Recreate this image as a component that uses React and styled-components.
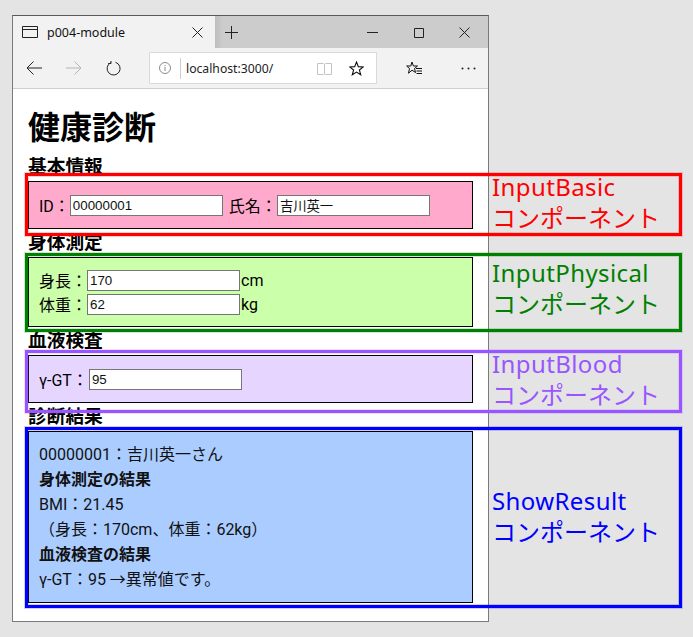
import React from "react";
import styled, { createGlobalStyle } from "styled-components";

const GlobalStyle = createGlobalStyle`
    html, body {
        margin: 0;
        padding: 0;
        background: #e4e4e4;
    }
    body {
        font-family: Roboto, "Noto Sans CJK JP", sans-serif;
        color: #000;
    }
`;

const Page = styled.div`
    position: relative;
    width: 693px;
    height: 637px;
    padding: 15px 0 0 12px;
    box-sizing: border-box;
    overflow: hidden;
`;

// Browser chrome
const Window = styled.div`
    width: 477px;
    height: 607px;
    box-sizing: border-box;
    border: 1px solid #7a7a7a;
    border-top-color: #5a5a5a;
    background: #fff;
    display: flex;
    flex-direction: column;
`;

const TitleBar = styled.div`
    height: 32px;
    background: #cccccc;
    display: flex;
    align-items: stretch;
`;

const Tab = styled.div`
    width: 202px;
    background: #f2f2f2;
    display: flex;
    align-items: center;
    padding: 0 12px 0 9px;
    box-sizing: border-box;
    font-family: "Noto Sans", sans-serif;
    font-size: 12.5px;
    color: #111;

    span {
        margin-left: 9px;
        flex: 1;
    }
`;

const NewTab = styled.div`
    width: 30px;
    padding-left: 2px;
    box-sizing: border-box;
    display: flex;
    align-items: center;
    justify-content: center;
    background: linear-gradient(to right, #bdbdbd, #cccccc 8px);
`;

const WindowButtons = styled.div`
    margin-left: auto;
    display: flex;
    align-items: center;
    gap: 35px;
    padding-right: 18px;
`;

const ToolBar = styled.div`
    height: 40px;
    background: #f2f2f2;
    border-bottom: 1px solid #cfcfcf;
    display: flex;
    align-items: center;
    padding-left: 13px;
    flex: none;
`;

const NavButtons = styled.div`
    display: flex;
    align-items: center;
    gap: 24px;
    width: 123px;
`;

const AddressBar = styled.div`
    width: 228px;
    height: 32px;
    box-sizing: border-box;
    background: #fff;
    border: 1px solid #d9d9d9;
    display: flex;
    align-items: center;
    padding: 0 12px 0 9px;
    font-family: "Noto Sans", sans-serif;
    font-size: 12.2px;
    color: #222;
`;

const Url = styled.span`
    border-left: 1px solid #cfcfcf;
    margin-left: 9px;
    padding-left: 5px;
    height: 21px;
    line-height: 21px;
    flex: 1;
`;

const FavoriteStar = styled.div`
    display: flex;
    margin-left: 17px;
`;

const ToolIcons = styled.div`
    display: flex;
    align-items: center;
    gap: 39px;
    margin-left: 29px;
`;

// Page content
const Content = styled.div`
    padding: 0 15px;
`;

const Title = styled.h1`
    font-size: 32px;
    line-height: 44px;
    font-weight: 700;
    margin: 17px 0 0;
`;

const Heading = styled.h3`
    font-size: 18.72px;
    line-height: 26px;
    font-weight: 700;
    height: 20px;
    margin: ${p => p.$top}px 0 0;
`;

const Panel = styled.div`
    width: 445px;
    box-sizing: border-box;
    border: 1px solid #000;
    background: ${p => p.$color};
    padding: ${p => p.$pad};
    font-size: 16px;
    margin-top: 7px;
`;

const Row = styled.div`
    display: flex;
    align-items: center;
    height: ${p => p.$height || 24}px;
`;

const FieldLabel = styled.label`
    white-space: nowrap;
    margin-left: ${p => p.$left || 0}px;
    margin-right: ${p => p.$right || 0}px;
`;

const TextBox = styled.input`
    width: 153px;
    height: 21px;
    box-sizing: border-box;
    border: 1px solid #767676;
    padding: 0 2px;
    margin: 0 1px 0 0;
    font-family: "Liberation Sans", "Noto Sans CJK JP", sans-serif;
    font-size: 13.33px;
    color: #111;
    background: #fff;
    border-radius: 0;
    outline: none;
`;

const ResultLine = styled.div`
    height: 25px;
    line-height: 25px;
    font-size: 16px;
    font-weight: ${p => (p.$bold ? 700 : 400)};
    white-space: nowrap;
    color: #111;
`;

// Annotation frames drawn over the screenshot
const Frame = styled.div`
    position: absolute;
    left: 25px;
    top: ${p => p.$top}px;
    width: 657px;
    height: ${p => p.$height}px;
    box-sizing: border-box;
    border: 3px solid ${p => p.$color};
    box-shadow: 0 0 0 1px ${p => p.$color}30, inset 0 0 0 1px ${p => p.$color}30;
    color: ${p => p.$color};
    padding-left: 464px;
    font-family: "Noto Sans", "Noto Sans CJK JP", sans-serif;
    font-size: 24px;
    line-height: 31px;
    white-space: nowrap;
`;

const FrameName = styled.div`
    margin-top: ${p => p.$offset}px;
    letter-spacing: 0.4px;
`;

const Svg = ({ w = 16, h = 16, children, stroke = "#222", sw = 1 }) => (
    <svg width={w} height={h} viewBox={`0 0 ${w} ${h}`} fill="none" stroke={stroke} strokeWidth={sw}>
        {children}
    </svg>
);

const frames = [
    { name: "InputBasic", color: "#ff0000", top: 173, height: 63, offset: -5 },
    { name: "InputPhysical", color: "#008000", top: 253, height: 79, offset: 1 },
    { name: "InputBlood", color: "#9955ff", top: 350, height: 63, offset: -5 },
    { name: "ShowResult", color: "#0000ff", top: 427, height: 181, offset: 55 },
];

function App() {
    return (
        <Page>
            <GlobalStyle />
            <Window>
                <TitleBar>
                    <Tab>
                        <Svg w={16} h={12}>
                            <path d="M.5.5h15v11H.5zM.5 3.500h15" />
                        </Svg>
                        <span>p004-module</span>
                        <Svg w={11} h={11}>
                            <path d="M.5.5l10 10M10.500.5l-10 10" />
                        </Svg>
                    </Tab>
                    <NewTab>
                        <Svg w={13} h={13}>
                            <path d="M6.500 0v13M0 6.500h13" />
                        </Svg>
                    </NewTab>
                    <WindowButtons>
                        <Svg w={11} h={11}>
                            <path d="M0 5.500h11" />
                        </Svg>
                        <Svg w={11} h={11}>
                            <path d="M1.500 1.500h9v9h-9z" />
                        </Svg>
                        <Svg w={11} h={11}>
                            <path d="M.5.5l10 10M10.500.5l-10 10" />
                        </Svg>
                    </WindowButtons>
                </TitleBar>
                <ToolBar>
                    <NavButtons>
                        <Svg w={16} h={14}>
                            <path d="M16 7H1M7.500.5L1 7l6.500 6.500" />
                        </Svg>
                        <Svg w={16} h={14} stroke="#b5b5b5">
                            <path d="M0 7h15M8.500.5L15 7l-6.500 6.500" />
                        </Svg>
                        <Svg w={15} h={15}>
                            <path d="M9.500 1.300A6.500 6.500 0 1 1 4.700 1.700M5 0v2.500H2.200" />
                        </Svg>
                    </NavButtons>
                    <AddressBar>
                        <Svg w={12} h={12} stroke="#8a8a8a">
                            <circle cx="6" cy="6" r="5.500" />
                            <path d="M6 5v4M6 3v1" />
                        </Svg>
                        <Url>localhost:3000/</Url>
                        <Svg w={15} h={13} stroke="#c4c4c4">
                            <path d="M.5 1.500h6l1 1 1-1h6v11h-6l-1-.5-1 .5h-6zM7.500 2.500v9.500" />
                        </Svg>
                        <FavoriteStar>
                            <Svg w={15} h={15} stroke="#111" sw={1.1}>
                                <path d="M7.500 1l1.800 4.600 5 .3-3.900 3.100 1.300 4.800-4.200-2.700-4.200 2.700 1.300-4.800L.7 5.900l5-.3z" />
                            </Svg>
                        </FavoriteStar>
                    </AddressBar>
                    <ToolIcons>
                        <Svg w={16} h={15} stroke="#111">
                            <path d="M6 1l1.400 4H11.500L8.500 7.500l1 4-3.500-2.300-3.500 3 1-4.700L.7 5H4.800zM10 7.500h6M10.500 10h5.500M10.500 12.500h5.500" />
                        </Svg>
                        <Svg w={15} h={3} stroke="none">
                            <circle cx="1.500" cy="1.500" r="1" fill="#222" />
                            <circle cx="7.500" cy="1.500" r="1" fill="#222" />
                            <circle cx="13.500" cy="1.500" r="1" fill="#222" />
                        </Svg>
                    </ToolIcons>
                </ToolBar>
                <Content>
                    <Title>健康診断</Title>
                    <Heading $top={4}>基本情報</Heading>
                    <Panel $color="#ffaacc" $pad="0 10px">
                        <Row $height={46}>
                            <FieldLabel>ID：</FieldLabel>
                            <TextBox readOnly value="00000001" />
                            <FieldLabel $left={5}>氏名：</FieldLabel>
                            <TextBox readOnly value="吉川英一" />
                        </Row>
                    </Panel>
                    <Heading $top={1}>身体測定</Heading>
                    <Panel $color="#ccffaa" $pad="10px">
                        <Row>
                            <FieldLabel>身長：</FieldLabel>
                            <TextBox readOnly value="170" />
                            cm
                        </Row>
                        <Row>
                            <FieldLabel>体重：</FieldLabel>
                            <TextBox readOnly value="62" />
                            kg
                        </Row>
                    </Panel>
                    <Heading $top={1}>血液検査</Heading>
                    <Panel $color="#e5d5ff" $pad="0 10px">
                        <Row $height={46}>
                            <FieldLabel $right={1}>γ-GT：</FieldLabel>
                            <TextBox readOnly value="95" />
                        </Row>
                    </Panel>
                    <Heading $top={1}>診断結果</Heading>
                    <Panel $color="#aaccff" $pad="10px">
                        <ResultLine>00000001：吉川英一さん</ResultLine>
                        <ResultLine $bold>身体測定の結果</ResultLine>
                        <ResultLine>BMI：21.45</ResultLine>
                        <ResultLine>（身長：170cm、体重：62kg）</ResultLine>
                        <ResultLine $bold>血液検査の結果</ResultLine>
                        <ResultLine>γ-GT：95 →異常値です。</ResultLine>
                    </Panel>
                </Content>
            </Window>
            {frames.map(f => (
                <Frame key={f.name} $color={f.color} $top={f.top} $height={f.height}>
                    <FrameName $offset={f.offset}>{f.name}</FrameName>
                    <div>コンポーネント</div>
                </Frame>
            ))}
        </Page>
    );
}

export default App;
